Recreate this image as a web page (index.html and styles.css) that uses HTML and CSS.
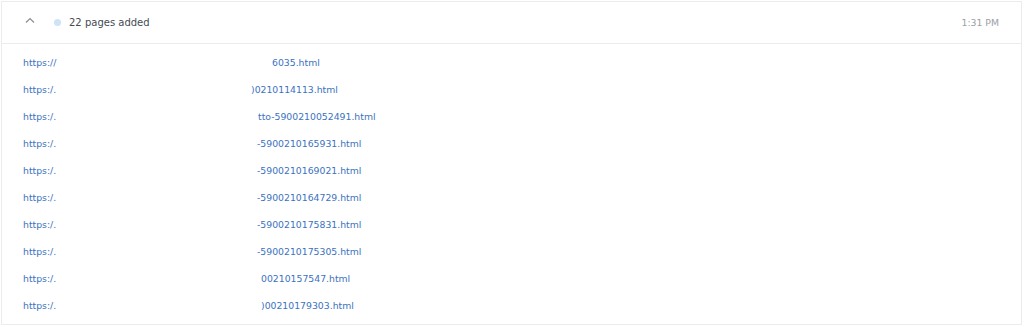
FILE: index.html
```html
<!DOCTYPE html>
<html lang="en">
<head>
<meta charset="UTF-8" />
<meta name="viewport" content="width=device-width, initial-scale=1" />
<title>Crawl log</title>
<link rel="stylesheet" href="styles.css">
</head>
<body>

<div class="event">
  <div class="event-head">
    <span class="toggle">
      <svg width="10" height="6" viewBox="0 0 10 6"><path d="M1 5.5 L5 1.5 L9 5.5" fill="none" stroke="#8a8f96" stroke-width="1.2"/></svg>
    </span>
    <span class="dot"></span>
    <span class="title">22 pages added</span>
    <span class="time">1:31 PM</span>
  </div>

  <ul class="pages">
    <li><a href="#"><span class="proto">https://</span><span class="tail shift">6035.html</span></a></li>
    <li><a href="#"><span class="proto">https:/.</span><span class="tail cut">)0210114113.html</span></a></li>
    <li><a href="#"><span class="proto">https:/.</span><span class="tail mid">tto-5900210052491.html</span></a></li>
    <li><a href="#"><span class="proto">https:/.</span><span class="tail">-5900210165931.html</span></a></li>
    <li><a href="#"><span class="proto">https:/.</span><span class="tail">-5900210169021.html</span></a></li>
    <li><a href="#"><span class="proto">https:/.</span><span class="tail">-5900210164729.html</span></a></li>
    <li><a href="#"><span class="proto">https:/.</span><span class="tail">-5900210175831.html</span></a></li>
    <li><a href="#"><span class="proto">https:/.</span><span class="tail">-5900210175305.html</span></a></li>
    <li><a href="#"><span class="proto">https:/.</span><span class="tail late">00210157547.html</span></a></li>
    <li><a href="#"><span class="proto">https:/.</span><span class="tail late">)00210179303.html</span></a></li>
  </ul>
</div>

</body>
</html>
```

FILE: styles.css
```css
body {
  margin: 0;
  padding: 1px 2px 0 1px;
  font-family: "DejaVu Sans", sans-serif;
  background: #fff;
}
.event {
  border: 1px solid #ececec;
  height: 324px;
  box-sizing: border-box;
  overflow: hidden;
}
.event-head {
  display: flex;
  align-items: center;
  height: 41px;
  padding: 0 22px 0 23px;
  border-bottom: 1px solid #ececec;
}
.toggle {
  display: flex;
  width: 10px;
  margin-top: -5px;
}
.dot {
  width: 7px;
  height: 7px;
  border-radius: 50%;
  background: #cde3f7;
  margin-left: 19px;
}
.title {
  margin-left: 8px;
  font-size: 10px;
  color: #444b53;
}
.time {
  margin-left: auto;
  font-size: 9.3px;
  color: #9aa0a6;
}
.pages {
  list-style: none;
  margin: 0;
  padding: 5px 0 0 21px;
}
.pages li {
  height: 27px;
  line-height: 27px;
}
.pages a {
  display: flex;
  font-size: 9.3px;
  color: #3b72c0;
  text-decoration: none;
}
.proto {
  width: 234px;
}
.tail.shift {
  margin-left: 15px;
}
.tail.mid {
  margin-left: 1px;
}
.tail.cut {
  margin-left: -6px;
}
.tail.late {
  margin-left: 4px;
}
```
